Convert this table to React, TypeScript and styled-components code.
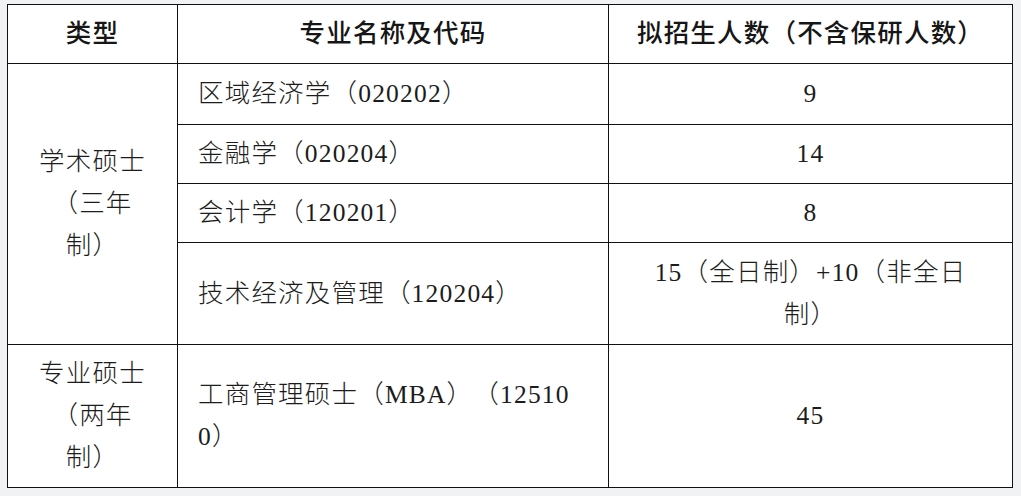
import React from "react";
import styled, { createGlobalStyle } from "styled-components";

const GlobalStyle = createGlobalStyle`
  html, body {
    margin: 0;
    padding: 0;
    background: #f1f2f4;
  }
  body {
    font-family: "Liberation Serif", "Noto Sans CJK SC", serif;
    color: #1c1c1c;
  }
`;

type Program = {
  name: string;
  quota: string;
};

type Group = {
  type: string;
  programs: Program[];
};

const groups: Group[] = [
  {
    type: "学术硕士（三年制）",
    programs: [
      { name: "区域经济学（020202）", quota: "9" },
      { name: "金融学（020204）", quota: "14" },
      { name: "会计学（120201）", quota: "8" },
      { name: "技术经济及管理（120204）", quota: "15（全日制）+10（非全日制）" },
    ],
  },
  {
    type: "专业硕士（两年制）",
    programs: [{ name: "工商管理硕士（MBA）（125100）", quota: "45" }],
  },
];

const Page = styled.div`
  padding: 4px 9px 9px 7px;
`;

const Table = styled.table`
  width: 1005px;
  table-layout: fixed;
  border-collapse: collapse;
  background: #ffffff;
  font-size: 25.5px;
  letter-spacing: 1.2px;
  line-height: 42px;
  text-spacing-trim: space-all;
  font-feature-settings: "halt" 0, "chws" 0;
`;

const HeadCell = styled.th`
  border: 1.5px solid #111;
  padding: 8px 20px;
  font-weight: 500;
  text-align: center;
  color: #161616;
`;

const Cell = styled.td<{ $align?: "left" | "center"; $padX?: number }>`
  border: 1.5px solid #111;
  padding: 8px ${({ $padX }) => $padX ?? 20}px;
  font-weight: 300;
  text-align: ${({ $align }) => $align ?? "center"};
  vertical-align: middle;
  word-break: break-all;
`;

const Row = styled.tr<{ $h: number }>`
  height: ${({ $h }) => $h}px;
`;

const rowHeights = [61, 59, 59, 102, 143];

export default function App() {
  let rowIndex = 0;
  return (
    <>
      <GlobalStyle />
      <Page>
        <Table>
          <colgroup>
            <col style={{ width: 170 }} />
            <col style={{ width: 431 }} />
            <col style={{ width: 404 }} />
          </colgroup>
          <thead>
            <Row $h={59}>
              <HeadCell>类型</HeadCell>
              <HeadCell>专业名称及代码</HeadCell>
              <HeadCell>拟招生人数（不含保研人数）</HeadCell>
            </Row>
          </thead>
          <tbody>
            {groups.map((group) =>
              group.programs.map((program, i) => {
                const h = rowHeights[rowIndex++];
                return (
                  <Row key={program.name} $h={h}>
                    {i === 0 && (
                      <Cell rowSpan={group.programs.length}>{group.type}</Cell>
                    )}
                    <Cell $align="left">{program.name}</Cell>
                    <Cell $padX={34}>{program.quota}</Cell>
                  </Row>
                );
              })
            )}
          </tbody>
        </Table>
      </Page>
    </>
  );
}
